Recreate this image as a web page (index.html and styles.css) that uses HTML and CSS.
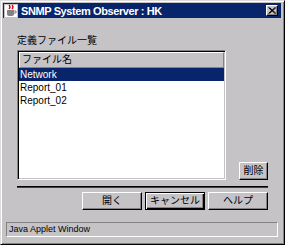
FILE: index.html
```html
<!DOCTYPE html>
<html>
<head>
<title>SNMP System Observer</title>
<link rel="stylesheet" href="styles.css">
</head>
<body>
 <div class="window">
    <div class="titlebar">
        <svg class="app-icon" width="14" height="14" viewBox="0 0 14 14">
            <rect x="0" y="0" width="14" height="14" fill="#c6c3c6"/>
            <rect x="1" y="1" width="12" height="12" fill="#fff"/>
            <path d="M3 6 h7 v4 a2 2 0 0 1 -2 2 h-3 a2 2 0 0 1 -2 -2z" fill="#848284"/>
            <path d="M10 7 h2 v2 h-2" fill="none" stroke="#848284" stroke-width="1"/>
            <path d="M5 1 q2 2 0 4 M8 1 q2 2 0 4" stroke="#e00000" stroke-width="1.4" fill="none"/>
        </svg>
        <span class="title">SNMP System Observer : HK</span>
        <div class="close">
            <svg width="8" height="7" viewBox="0 0 8 7">
                <path d="M0.5 0.5 L7 6.5 M1.5 0.5 L8 6.5 M7 0.5 L0.5 6.5 M8 0.5 L1.5 6.5" stroke="#000" stroke-width="1"/>
            </svg>
        </div>
    </div>

    <div class="content">
        <p class="label">定義ファイル一覧</p>
        <div class="main">
            <div class="list">
                <div class="list-head">ファイル名</div>
                <div class="item selected">Network</div>
                <div class="item">Report_01</div>
                <div class="item">Report_02</div>
            </div>
            <button class="btn btn-small">削除</button>
        </div>
        <div class="sep"></div>
        <div class="buttons">
            <button class="btn">開く</button>
            <button class="btn btn-default">キャンセル</button>
            <button class="btn">ヘルプ</button>
        </div>
    </div>

    <div class="status">Java Applet Window</div>
 </div>
</body>
</html>
```

FILE: styles.css
```css
body{
    margin: 0;
    padding: 0;
    background: #c6c3c6;
    font-family: "Liberation Sans", "Noto Sans CJK JP", sans-serif;
}
.window{
    width: 285px;
    height: 245px;
    box-sizing: border-box;
    background: #c6c3c6;
    border: 1px solid;
    border-color: #dedbde #000 #000 #dedbde;
    box-shadow: inset 1px 1px #fff, inset -1px -1px #848284;
    padding: 2px 3px 3px 2px;
    display: flex;
    flex-direction: column;
}
.titlebar{
    height: 15px;
    background: #08246b;
    color: #fff;
    display: flex;
    align-items: center;
    padding: 0 3px 0 1px;
}
.app-icon{
    flex: none;
}
.title{
    margin-left: 3px;
    font-size: 11px;
    font-weight: bold;
    letter-spacing: -0.4px;
    white-space: nowrap;
}
.close{
    margin-left: auto;
    width: 12px;
    height: 11px;
    box-sizing: border-box;
    background: #c6c3c6;
    border: 1px solid;
    border-color: #fff #000 #000 #fff;
    box-shadow: inset -1px -1px #848284;
    display: flex;
    align-items: center;
    justify-content: center;
    padding: 0 1px 1px 0;
}
.content{
    padding: 0 13px 0 14px;
    display: flex;
    flex-direction: column;
}
.label{
    margin: 17px 0 0;
    font-size: 10px;
    line-height: 12px;
    color: #000;
}
.main{
    margin-top: 3px;
    display: flex;
    align-items: flex-end;
    justify-content: space-between;
}
.list{
    width: 209px;
    height: 130px;
    box-sizing: border-box;
    background: #fff;
    border: 1px solid;
    border-color: #848284 #fff #fff #848284;
    box-shadow: inset 1px 1px #000, inset -1px -1px #c6c3c6;
    padding: 1px;
}
.list-head{
    height: 16px;
    box-sizing: border-box;
    background: #c6c3c6;
    border: 1px solid;
    border-color: #fff #848284 #848284 #fff;
    padding-left: 2px;
    font-size: 10px;
    line-height: 14px;
    color: #000;
}
.item{
    height: 13px;
    line-height: 13px;
    padding-left: 1px;
    font-size: 10px;
    color: #000;
}
.item.selected{
    background: #08246b;
    color: #fff;
}
.btn{
    width: 60px;
    height: 18px;
    box-sizing: border-box;
    margin: 0;
    padding: 0;
    background: #c6c3c6;
    border: 1px solid;
    border-color: #fff #000 #000 #fff;
    box-shadow: inset -1px -1px #848284;
    font-family: "Liberation Sans", "Noto Sans CJK JP", sans-serif;
    font-size: 10px;
    line-height: 14px;
    color: #000;
}
.btn-small{
    width: 29px;
}
.btn-default{
    border-color: #000;
    box-shadow: inset 1px 1px #fff, inset -1px -1px #000, inset -2px -2px #848284;
}
.sep{
    margin-top: 6px;
    height: 2px;
    background: #000;
    border-bottom: 1px solid #424142;
    box-sizing: border-box;
}
.buttons{
    margin-top: 4px;
    display: flex;
    justify-content: flex-end;
    gap: 3px;
}
.status{
    margin: auto 3px 4px 3px;
    height: 15px;
    box-sizing: border-box;
    border: 1px solid;
    border-color: #848284 #fff #fff #848284;
    padding-left: 2px;
    font-size: 9px;
    line-height: 13px;
    color: #000;
}
```
